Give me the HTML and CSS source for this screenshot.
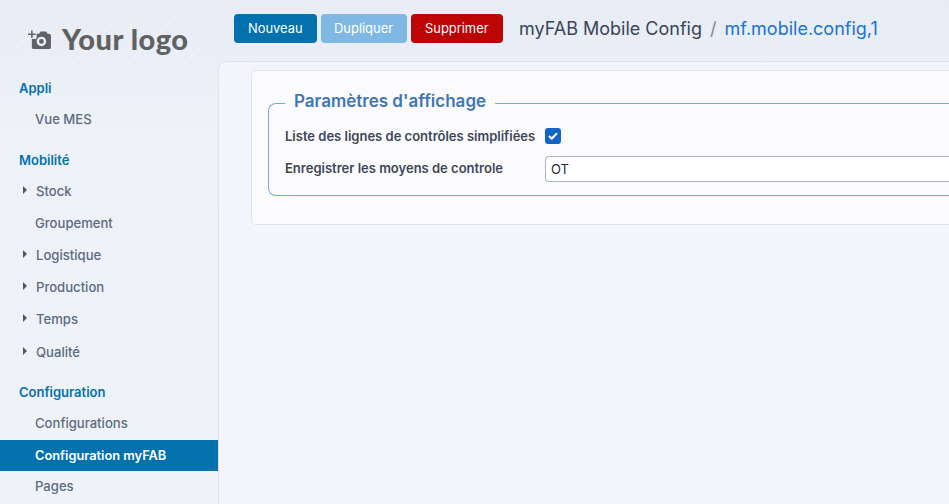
FILE: index.html
```html
<!DOCTYPE html>
<html lang="fr">
<head>
<meta charset="utf-8">
<title>myFAB Mobile Config</title>
<link rel="stylesheet" href="styles.css">
</head>
<body>
<div class="app">
  <aside class="sidebar">
    <div class="logo">
      <svg class="logo-icon" width="23" height="21" viewBox="0 0 24 22">
        <path class="logo-plus" d="M0 5.500h8M4 1.500v8" />
        <path class="logo-body" fill-rule="evenodd" d="M9 5h2.500l1.500-2.500h6L20.500 5H22a2 2 0 0 1 2 2v12a2 2 0 0 1-2 2H6a2 2 0 0 1-2-2V10.500h3.500a1.500 1.500 0 0 0 1.500-1.500ZM14 8a5 5 0 1 0 0 10a5 5 0 0 0 0-10Zm0 2.500a2.500 2.500 0 1 1 0 5a2.500 2.500 0 0 1 0-5Z"/>
      </svg>
      <span class="logo-text">Your logo</span>
    </div>
    <nav class="menu">
      <div class="group">Appli</div>
      <a class="item">Vue MES</a>
      <div class="group">Mobilité</div>
      <a class="item parent">Stock</a>
      <a class="item">Groupement</a>
      <a class="item parent">Logistique</a>
      <a class="item parent">Production</a>
      <a class="item parent">Temps</a>
      <a class="item parent spaced">Qualité</a>
      <div class="group">Configuration</div>
      <a class="item">Configurations</a>
      <a class="item active">Configuration myFAB</a>
      <a class="item last">Pages</a>
    </nav>
  </aside>
  <main class="main">
    <header class="topbar">
      <div class="buttons">
        <button class="btn btn-primary">Nouveau</button>
        <button class="btn btn-disabled">Dupliquer</button>
        <button class="btn btn-danger">Supprimer</button>
      </div>
      <div class="crumbs">
        <span class="crumb">myFAB Mobile Config</span>
        <span class="sep">/</span>
        <span class="crumb-link">mf.mobile.config,1</span>
      </div>
    </header>
    <section class="content">
      <div class="card">
        <fieldset class="panel">
          <legend>Paramètres d'affichage</legend>
          <div class="row">
            <label class="lbl">Liste des lignes de contrôles simplifiées</label>
            <span class="check">
              <svg width="10" height="8" viewBox="0 0 10 8"><path d="M1 4l2.700 2.700L9 1.300"/></svg>
            </span>
          </div>
          <div class="row">
            <label class="lbl">Enregistrer les moyens de controle</label>
            <div class="input">OT</div>
          </div>
        </fieldset>
      </div>
    </section>
  </main>
</div>
</body>
</html>
```
FILE: styles.css
```css
* { box-sizing: border-box; }
html, body { margin: 0; height: 100%; }
body {
  font-family: Inter, "Liberation Sans", sans-serif;
  background: linear-gradient(180deg, #e7ecf5 0, #edf1f8 130px, #eff3f9 504px);
  overflow: hidden;
}
.app { display: flex; width: 949px; height: 504px; overflow: hidden; }

.sidebar { width: 218px; flex: none; padding-top: 14px; }
.logo {
  width: 188px; height: 50px; margin-left: 14px;
  display: flex; align-items: center; gap: 11px; padding-left: 14px;
  background: repeating-linear-gradient(135deg, rgba(255,255,255,0) 0 11px, rgba(255,255,255,.14) 11px 13px);
}
.logo-icon { flex: none; }
.logo-body { fill: #606266; }
.logo-plus { stroke: #606266; stroke-width: 1.600; fill: none; }
.logo-text {
  font-family: Lato, "Open Sans", sans-serif; font-weight: 900; font-size: 29px; color: #616161;
  letter-spacing: .5px; line-height: 50px;
}
.menu { display: flex; flex-direction: column; }
.group {
  font-size: 13px; font-weight: 600; color: #0271ae; padding-left: 19px;
  height: 20px; line-height: 20px; margin-top: 15px; margin-bottom: 5px;
}
.group:first-child { margin-top: 14px; }
.spaced + .group { margin-top: 14px; }
.item {
  position: relative;
  font-size: 13.100px; font-weight: 500; color: #5c6b80; padding-left: 35px;
  height: 32px; line-height: 32px; white-space: nowrap;
}
.parent { padding-left: 36px; }
.parent::before {
  content: ""; position: absolute; left: 23px; top: 11px;
  border-left: 4px solid #4f5a68; border-top: 4px solid transparent; border-bottom: 4px solid transparent;
}
.spaced { margin-top: 1px; }
.active { background: #0271ae; color: #fff; font-size: 12.800px; font-weight: 600; height: 31px; line-height: 31px; margin-top: 1px; }
.last { line-height: 30px; }

.main { flex: 1; min-width: 0; display: flex; flex-direction: column; }
.topbar { height: 61px; flex: none; display: flex; padding: 14px 0 0 16px; }
.buttons { display: flex; gap: 4px; height: 29px; }
.btn {
  font: 400 12.900px Inter, "Liberation Sans", sans-serif; color: #fff; border: 0; border-radius: 4px;
  padding: 0 14px; height: 29px; cursor: pointer;
}
.btn-primary { background: #0271ae; }
.btn-disabled { background: #7fb8e3; padding: 0 13.500px; }
.btn-danger { background: #bd0405; padding: 0 14.500px; }
.crumbs { margin-left: 16px; height: 29px; display: flex; align-items: center; font-size: 18px; gap: 8px; }
.crumb { color: #3a4557; }
.sep { color: #7b8ba0; }
.crumb-link { color: #1a73d0; }

.content {
  flex: 1; padding: 8px 0 0 32px;
  border-top: 1px solid #dfe4eb; border-left: 1px solid #dfe4eb; border-top-left-radius: 8px;
  background: #f3f5fa;
}
.card {
  width: 720px; height: 155px;
  background: #fbfbfe; border: 1px solid #dfe4eb; border-right: 0;
  border-radius: 5px 0 0 5px; padding: 20px 0 0 16px;
}
.panel {
  margin: 0; padding: 4px 0 0 16px; height: 105px;
  border: 1px solid #72aaee; border-right: 0; border-radius: 8px 0 0 8px;
  min-inline-size: 0;
}
legend {
  font-size: 17px; font-weight: 600; color: #4176b2; padding: 0 9px 4px; line-height: 21px;
}
.row { display: flex; align-items: center; height: 32px; }
.lbl { width: 260px; flex: none; font-size: 13px; font-weight: 600; color: #3d4759; }
.check {
  width: 16px; height: 16px; background: #1165c6; border-radius: 3px;
  display: flex; align-items: center; justify-content: center;
}
.check path { fill: none; stroke: #fff; stroke-width: 2; }
.input {
  flex: 1; height: 26px; line-height: 24px; padding-left: 5px; margin-top: 2px; font-size: 13px; font-weight: 400; color: #222b38;
  background: #fff; border: 1px solid #aab4c2; border-right: 0; border-radius: 4px 0 0 4px;
}
```
